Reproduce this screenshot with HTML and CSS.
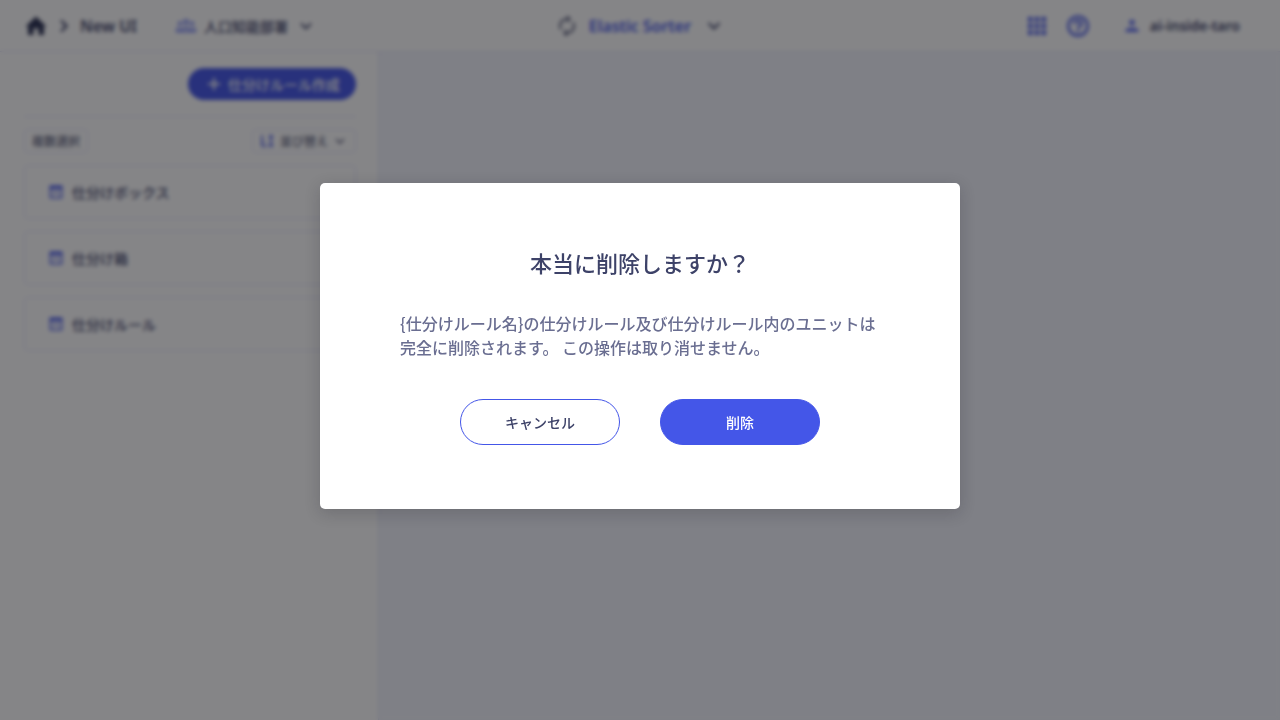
FILE: index.html
```html
<!DOCTYPE html>
<html lang="ja">
<head>
<meta charset="utf-8">
<meta name="viewport" content="width=device-width, initial-scale=1">
<title>Elastic Sorter</title>
<link rel="stylesheet" href="styles.css">
</head>
<body>
<div class="app">
  <header class="header">
    <nav class="crumbs">
      <a class="home" href="#" aria-label="ホーム"><svg width="24" height="24" viewBox="0 0 24 24" fill="currentColor"><path d="M9.500 21v-6.500h5V21h5.500v-8.500h2.500L12 2.500 1.500 12.500H4V21z"/></svg></a>
      <svg width="16" height="16" viewBox="0 0 16 16" fill="none" stroke="currentColor" stroke-width="2.400"><path d="M5 2.500l5.500 5.500L5 13.500"/></svg>
      <a class="crumb" href="#">New UI</a>
      <button class="plain team" type="button">
        <svg class="team-icon" width="20" height="16" viewBox="0 0 20 16" fill="none" stroke="currentColor" stroke-width="1.500"><circle cx="10" cy="4" r="2"/><circle cx="3.800" cy="5.500" r="1.200"/><circle cx="16.200" cy="5.500" r="1.200"/><path d="M5.500 13.500v-1.200c0-3.200 9-3.200 9 0v1.200zM5.500 13.500H.8v-1c0-1.300 1.500-2.200 3.200-2.200M14.500 13.500h4.700v-1c0-1.300-1.500-2.200-3.200-2.200"/></svg>
        <span>人口知能部署</span>
        <svg class="chev" width="12" height="12" viewBox="0 0 12 12" fill="none" stroke="currentColor" stroke-width="1.800"><path d="M1 3.500l5 5 5-5"/></svg>
      </button>
    </nav>
    <button class="plain product" type="button">
      <svg class="cycle" width="24" height="24" viewBox="0 0 24 24" fill="currentColor"><path d="M12 6v3l4-4-4-4v3c-4.420 0-8 3.580-8 8 0 1.570.46 3.030 1.240 4.260L6.700 14.800c-.45-.83-.7-1.790-.7-2.800 0-3.310 2.690-6 6-6zm6.760 1.740L17.300 9.200c.44.840.7 1.790.7 2.800 0 3.310-2.690 6-6 6v-3l-4 4 4 4v-3c4.420 0 8-3.580 8-8 0-1.570-.46-3.030-1.240-4.260z"/></svg>
      <span class="accent">Elastic Sorter</span>
      <svg class="chev" width="14" height="14" viewBox="0 0 14 14" fill="none" stroke="currentColor" stroke-width="2"><path d="M1.500 4L7 9.500 12.500 4"/></svg>
    </button>
    <div class="tools">
      <button class="plain accent" type="button" aria-label="アプリ一覧"><svg width="18" height="18" viewBox="0 0 18 18" fill="currentColor"><path d="M0 0h4.500v4.500H0zM6.750 0h4.500v4.500h-4.500zM13.500 0H18v4.500h-4.500zM0 6.750h4.500v4.500H0zM6.750 6.750h4.500v4.500h-4.500zM13.500 6.750H18v4.500h-4.500zM0 13.500h4.500V18H0zM6.750 13.500h4.500V18h-4.500zM13.500 13.500H18V18h-4.500z"/></svg></button>
      <button class="plain accent" type="button" aria-label="ヘルプ"><svg width="24" height="24" viewBox="0 0 24 24" fill="none" stroke="currentColor" stroke-width="2.400"><circle cx="12" cy="12" r="9.600"/><path d="M8.500 10c0-4.500 7-4.500 7-.3 0 2.300-3.500 2.300-3.500 5.300M12 16.200v2.300"/></svg></button>
      <button class="plain user" type="button">
        <svg class="user-icon" width="16" height="16" viewBox="0 0 16 16" fill="currentColor"><circle cx="8" cy="4.500" r="2.800"/><path d="M1.500 14v-1.500c0-3.600 13-3.600 13 0V14z"/></svg>
        <span>ai-inside-taro</span>
      </button>
    </div>
  </header>
  <div class="main">
    <aside class="sidebar">
      <div class="create-row">
        <button class="create" type="button"><svg width="12" height="12" viewBox="0 0 12 12" fill="none" stroke="currentColor" stroke-width="2"><path d="M6 0v12M0 6h12"/></svg>仕分けルール作成</button>
      </div>
      <div class="filters">
        <button class="small" type="button">複数選択</button>
        <button class="small" type="button">
          <svg class="accent" width="14" height="14" viewBox="0 0 14 14" fill="none" stroke="currentColor" stroke-width="1.500"><path d="M2 1v11h5M2 8h2M11 2v10M9 2h4M9 12h4"/><path d="M11 1l2 3H9zM11 13l2-3H9z" fill="currentColor" stroke="none"/></svg>
          並び替え
          <svg class="sort-chev" width="10" height="10" viewBox="0 0 10 10" fill="none" stroke="currentColor" stroke-width="1.600"><path d="M1 3l4 4 4-4"/></svg>
        </button>
      </div>
      <ul class="rules">
        <li><a class="rule" href="#"><svg class="accent" width="16" height="16" viewBox="0 0 16 16"><path d="M1.500 1.500h13v3.500h-13z" fill="currentColor"/><path d="M2.500 5v8.800h11V5M5.500 8.500h5" fill="none" stroke="currentColor" stroke-width="1.600"/></svg>仕分けボックス</a></li>
        <li><a class="rule" href="#"><svg class="accent" width="16" height="16" viewBox="0 0 16 16"><path d="M1.500 1.500h13v3.500h-13z" fill="currentColor"/><path d="M2.500 5v8.800h11V5M5.500 8.500h5" fill="none" stroke="currentColor" stroke-width="1.600"/></svg>仕分け箱</a></li>
        <li><a class="rule" href="#"><svg class="accent" width="16" height="16" viewBox="0 0 16 16"><path d="M1.500 1.500h13v3.500h-13z" fill="currentColor"/><path d="M2.500 5v8.800h11V5M5.500 8.500h5" fill="none" stroke="currentColor" stroke-width="1.600"/></svg>仕分けルール</a></li>
      </ul>
    </aside>
    <main class="canvas"></main>
  </div>
</div>
<div class="overlay">
  <section class="dialog" role="alertdialog" aria-modal="true" aria-labelledby="dialog-title" aria-describedby="dialog-text">
    <h1 class="dialog-title" id="dialog-title">本当に削除しますか？</h1>
    <p class="dialog-text" id="dialog-text">{仕分けルール名}の仕分けルール及び仕分けルール内のユニットは完全に削除されます。 この操作は取り消せません。</p>
    <div class="actions">
      <button class="action" type="button">キャンセル</button>
      <button class="action primary" type="button">削除</button>
    </div>
  </section>
</div>
</body>
</html>
```
FILE: styles.css
```css
* { box-sizing: border-box; }
body {
  margin: 0;
  color: #3d4268;
  font-family: "Noto Sans", "Noto Sans CJK JP", sans-serif;
  font-size: 14px;
  font-weight: 500;
}
button { font: inherit; color: inherit; cursor: pointer; }
a { color: inherit; text-decoration: none; }
svg { display: block; flex: none; }
.plain {
  display: flex;
  align-items: center;
  padding: 0;
  border: 0;
  background: none;
}
.accent { color: #4456e8; }
.app { display: flex; flex-direction: column; min-height: 100vh; }
.header {
  display: grid;
  grid-template-columns: 1fr auto 1fr;
  align-items: center;
  height: 52px;
  padding: 0 28px 0 24px;
  border-bottom: 1px solid #e2e2f8;
  background: #fff;
}
.home { color: #2a3052; }
.crumbs { display: flex; align-items: center; gap: 8px; }
.crumb { font-size: 16px; font-weight: 600; }
.team { gap: 8px; margin-left: 31px; }
.team-icon, .user-icon { color: #5c6cf0; }
.team .chev { margin-left: 4px; }
.product { gap: 10px; font-size: 16px; font-weight: 600; }
.product .chev { margin-left: 6px; }
.cycle { color: #5c5f7c; }
.tools {
  display: flex;
  align-items: center;
  justify-content: flex-end;
  gap: 20px;
  padding-right: 12px;
}
.user { gap: 10px; margin-left: 14px; font-weight: 600; }
.main { display: flex; flex: 1; }
.sidebar {
  width: 378px;
  padding: 16px 22px 16px 24px;
  background: #fff;
}
.canvas { flex: 1; border-left: 1px solid #e2e2f8; background: #f3f5fc; }
.create-row {
  display: flex;
  justify-content: flex-end;
  padding-bottom: 16px;
  border-bottom: 1px solid #e2e2f8;
}
.create {
  display: flex;
  align-items: center;
  gap: 8px;
  height: 32px;
  padding: 0 16px 0 20px;
  border: 0;
  border-radius: 16px;
  background: #4456e8;
  color: #fff;
}
.filters { display: flex; justify-content: space-between; padding: 12px 0; }
.small {
  display: flex;
  align-items: center;
  gap: 6px;
  height: 24px;
  padding: 0 7px;
  border: 1px solid #e2e2f8;
  border-radius: 4px;
  background: #fff;
  color: #5c5f7c;
  font-size: 12px;
}
.sort-chev { margin: 0 3px 0 1px; }
.rules {
  display: flex;
  flex-direction: column;
  gap: 12px;
  margin: 0;
  padding: 0;
  list-style: none;
}
.rule {
  display: flex;
  align-items: center;
  gap: 8px;
  height: 54px;
  padding: 0 23px;
  border: 1px solid #e2e2f8;
  border-radius: 4px;
}
.overlay {
  position: fixed;
  inset: 0;
  display: flex;
  align-items: center;
  justify-content: center;
  padding: 16px 16px 44px;
  background: rgba(11, 11, 15, .5);
  backdrop-filter: blur(2px);
}
.dialog {
  width: 100%;
  max-width: 640px;
  padding: 64px 80px;
  border-radius: 5px;
  background: #fff;
  box-shadow: 0 4px 16px rgba(20, 20, 30, .2);
}
.dialog-title {
  margin: 0 0 32px;
  font-size: 22px;
  font-weight: 500;
  line-height: 32px;
  text-align: center;
}
.dialog-text {
  margin: 0 0 40px;
  color: #6a6e91;
  font-family: "Noto Sans CJK JP", sans-serif;
  font-size: 16px;
  font-weight: 500;
  line-height: 24px;
}
.actions { display: flex; justify-content: center; gap: 40px; }
.action {
  width: 160px;
  height: 46px;
  border: 1px solid #4456e8;
  border-radius: 23px;
  background: #fff;
}
.action.primary { background: #4456e8; color: #fff; }
```
